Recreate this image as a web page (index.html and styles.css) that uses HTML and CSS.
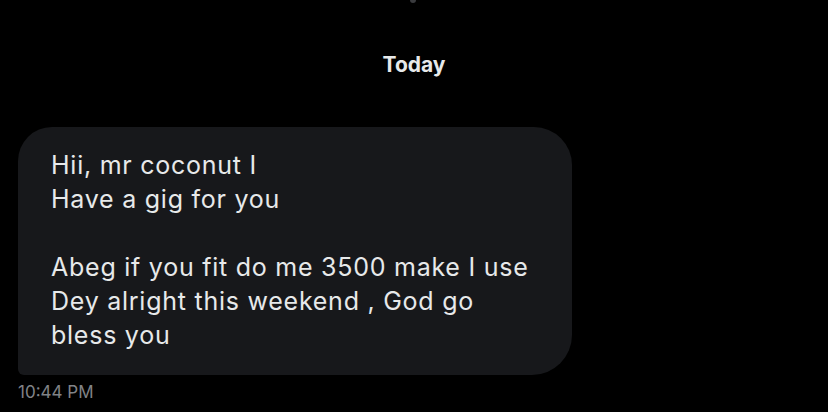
FILE: index.html
```html
<!DOCTYPE html>
<html lang="en">
<head>
  <meta charset="UTF-8" />
  <meta name="viewport" content="width=device-width, initial-scale=1.0" />
  <title>Messages</title>
  <link rel="stylesheet" href="styles.css">
</head>
<body>
  <div class="top-dot"></div>

  <div class="day-label">Today</div>

  <main class="thread">
    <div class="message received">
      <div class="bubble">Hii, mr coconut I
Have a gig for you

Abeg if you fit do me 3500 make I use
Dey alright this weekend , God go
bless you</div>
      <div class="time">10:44 PM</div>
    </div>
  </main>
</body>
</html>
```

FILE: styles.css
```css
:root {
  --bg: #000000;
  --bubble: #17181b;
  --text: #e7e9ea;
  --muted: #808387;
}

* {
  margin: 0;
  padding: 0;
  box-sizing: border-box;
}

body {
  font-family: Inter, 'Noto Sans', sans-serif;
  background-color: var(--bg);
  color: var(--text);
  width: 828px;
  height: 412px;
  overflow: hidden;
}

.top-dot {
  width: 6px;
  height: 6px;
  margin: -3px auto 0 410px;
  border-radius: 50%;
  background-color: #3a3b3e;
}

.day-label {
  text-align: center;
  font-size: 21px;
  font-weight: 700;
  margin-top: 50px;
  line-height: 24px;
}

.thread {
  padding: 0 18px;
  margin-top: 50px;
}

.message {
  display: flex;
  flex-direction: column;
  gap: 6px;
}

.bubble {
  width: 554px;
  background-color: var(--bubble);
  border-radius: 34px 38px 40px 6px;
  padding: 21px 20px 23px 33px;
  font-size: 25px;
  line-height: 34px;
  letter-spacing: 0.75px;
  white-space: pre-line;
}

.time {
  font-size: 17px;
  color: var(--muted);
  line-height: 22px;
}
```
